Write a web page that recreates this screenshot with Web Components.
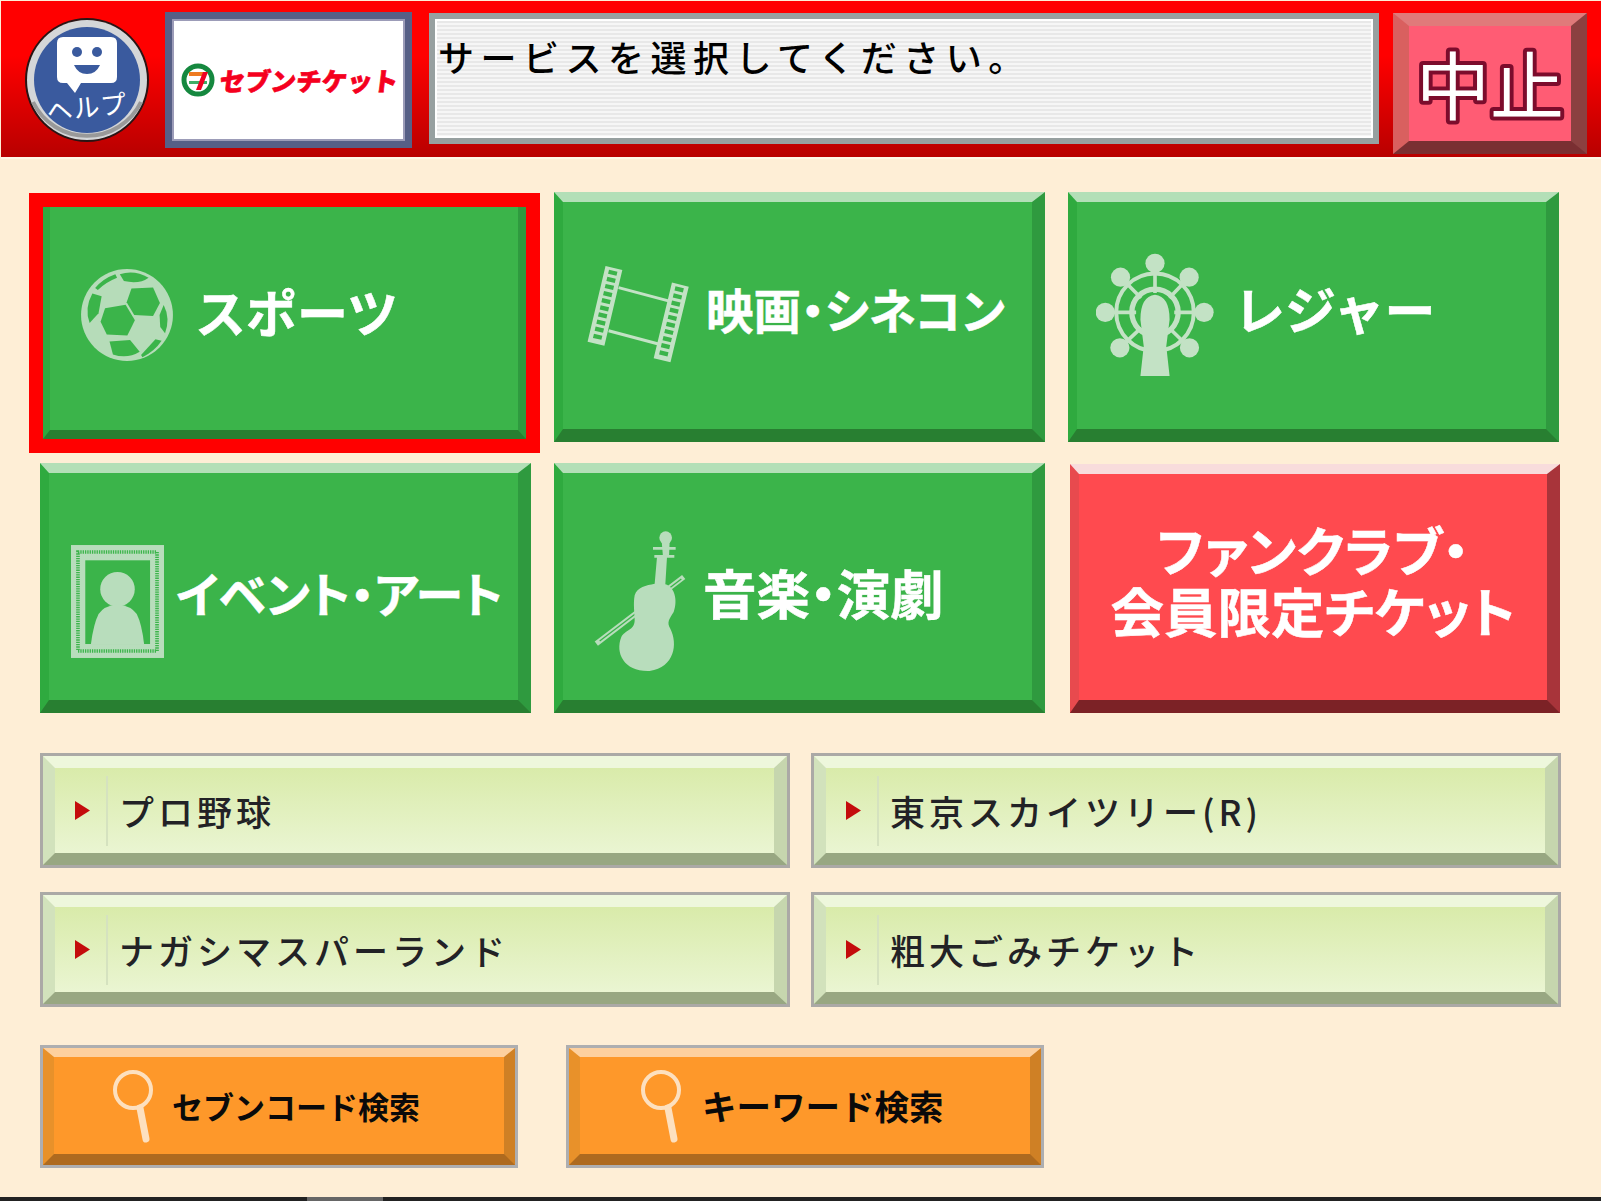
<!DOCTYPE html>
<html lang="ja">
<head>
<meta charset="utf-8">
<title>セブンチケット</title>
<style>
  html, body { margin: 0; padding: 0; }
  body {
    width: 1601px;
    height: 1201px;
    overflow: hidden;
    background: #feeed6;
    font-family: "Noto Sans CJK JP", "Noto Sans", sans-serif;
  }
  svg { display: block; }
</style>
</head>
<body>
<kiosk-page>
  <kiosk-header slot="header">サービスを選択してください。</kiosk-header>

  <big-button selected style="--pl:31px;--gap:22px;--fs:51px;--tt:-7px;--ff:normal">
    <svg slot="icon" width="92" height="96" viewBox="175 265 268 280" style="margin-top:-8px">
      <circle cx="309" cy="405" r="134" fill="#b6dcb9"/>
      <g fill="#3bb44a">
        <path d="M322 328 L385 325 L405 370 L385 408 L330 405 L308 368Z"/>
        <path d="M245 385 L305 375 L332 420 L310 465 L250 462 L232 425Z"/>
        <path d="M288 286 Q330 272 372 296 Q345 316 300 306Z"/>
        <path d="M216 326 Q240 298 275 286 L280 296 Q245 310 224 332Z"/>
        <path d="M208 342 L235 350 L226 400 L200 428 Q184 385 208 342Z"/>
        <path d="M416 376 Q436 415 420 458 L406 440 L404 405Z"/>
        <path d="M258 482 L318 478 L346 512 Q310 534 268 520Z"/>
        <path d="M350 522 L392 476 L410 480 Q390 510 354 528Z"/>
      </g>
    </svg>
    スポーツ
  </big-button>

  <big-button style="--pl:24px;--gap:16px;--fs:47.5px;--tt:-7px">
    <svg slot="icon" width="103" height="97" viewBox="110 260 310 292" style="margin-top:-2px">
      <g fill="none" stroke="#c3e2c5">
        <path d="M205 325 L355 365 M175 455 L325 495" stroke-width="9"/>
        <path d="M191 266 L137 494 M391 316 L336 544" stroke-width="52"/>
      </g>
      <path d="M189 274 L139 486 M389 324 L338 536" fill="none" stroke="#3bb44a" stroke-width="26" stroke-dasharray="13 9"/>
    </svg>
    映画・シネコン
  </big-button>

  <big-button style="--pl:19px;--gap:20px;--fs:51px;--tt:-7px;--ff:normal">
    <svg slot="icon" width="118" height="124" viewBox="104 220 356 372" style="margin-top:-2px">
      <g fill="#c3e2c5">
        <circle cx="282" cy="250" r="29"/><circle cx="178" cy="292" r="29"/><circle cx="385" cy="292" r="29"/>
        <circle cx="132" cy="398" r="29"/><circle cx="430" cy="398" r="29"/><circle cx="176" cy="505" r="29"/>
        <circle cx="386" cy="505" r="29"/>
      </g>
      <g fill="none" stroke="#c3e2c5">
        <circle cx="282" cy="398" r="117" stroke-width="12"/>
        <circle cx="282" cy="398" r="70" stroke-width="16"/>
        <path d="M282 250V340 M178 292L240 355 M385 292L325 355 M132 398H225 M430 398H340 M176 505L240 445 M386 505L325 445" stroke-width="11"/>
      </g>
      <path d="M238 590 L326 590 L316 500 L326 420 Q326 350 282 345 Q238 350 238 420 L248 500Z" fill="#c3e2c5"/>
    </svg>
    レジャー
  </big-button>

  <big-button style="--pl:22px;--gap:12px;--fs:48px;--tt:6px">
    <svg slot="icon" width="93" height="113" viewBox="122 272 280 340" style="margin-top:30px">
      <rect x="122" y="272" width="280" height="340" fill="#b8ddbc"/>
      <rect x="143" y="293" width="238" height="298" fill="#b8ddbc" stroke="#3bb44a" stroke-width="11" stroke-dasharray="4 3"/>
      <rect x="165" y="318" width="195" height="252" fill="#3bb44a"/>
      <circle cx="262" cy="405" r="52" fill="#b8ddbc"/>
      <path d="M182 570 Q190 510 205 480 Q220 455 262 450 Q304 455 320 480 Q335 510 342 570Z" fill="#b8ddbc"/>
    </svg>
    イベント・アート
  </big-button>

  <big-button style="--pl:30px;--gap:15px;--fs:53.5px;--tt:6px">
    <svg slot="icon" width="95" height="141" viewBox="130 232 285 423" style="margin-top:30px">
      <g fill="none" stroke="#b8ddbc">
        <path d="M140 570 L402 370" stroke-width="16"/>
        <path d="M150 562 L395 376" stroke="#3bb44a" stroke-width="4"/>
        <path d="M310 284 H378 M314 308 H374" stroke-width="8"/>
      </g>
      <g fill="#b8ddbc">
        <circle cx="348" cy="252" r="19"/>
        <path d="M336 262 L360 262 L358 310 L340 310Z"/>
        <path d="M322 310 L352 310 L347 392 C375 400 385 440 372 475 C360 495 350 505 362 525 C385 570 375 640 300 652 C225 655 195 600 215 550 C225 530 255 530 255 500 C255 480 250 450 255 425 C262 400 290 395 315 390Z"/>
      </g>
    </svg>
    音楽・演劇
  </big-button>

  <big-button tone="red" style="--fs:53.5px;--tt:-8px;margin:1px -1px 0 2px">
    <span style="display:block;width:100%;text-align:center;line-height:61px">ファンクラブ・<br>会員限定チケット</span>
  </big-button>

  <sub-button slot="list">プロ野球</sub-button>
  <sub-button slot="list">東京スカイツリー(R)</sub-button>
  <sub-button slot="list">ナガシマスパーランド</sub-button>
  <sub-button slot="list">粗大ごみチケット</sub-button>

  <search-button slot="search" style="--pl:58px;--gap:18px;--fs:31px">セブンコード検索</search-button>
  <search-button slot="search" style="--pl:60px;--gap:20px;--fs:34.5px">キーワード検索</search-button>
</kiosk-page>

<script>
// top level page: header, tiles, list buttons, search buttons, footer bar
class KioskPage extends HTMLElement {
  constructor() {
    super().attachShadow({ mode: "open" }).innerHTML = `
    <style>
      :host { display: flex; flex-direction: column; height: 1201px; }
      .tiles {
        display: grid;
        grid-template-columns: repeat(3, 491px);
        grid-auto-rows: 250px;
        column-gap: 23px;
        row-gap: 21px;
        margin: 33px 0 0 40px;
      }
      .list {
        display: grid;
        grid-template-columns: 750px 750px;
        grid-auto-rows: 115px;
        column-gap: 21px;
        row-gap: 24px;
        margin: 40px 0 0 40px;
      }
      .search {
        display: flex;
        gap: 48px;
        margin: 38px 0 0 40px;
      }
      .bar {
        margin-top: auto;
        height: 4px;
        background: linear-gradient(90deg, #222 307px, #666 307px, #666 383px, #222 383px);
      }
    </style>
    <slot name="header"></slot>
    <div class="tiles"><slot></slot></div>
    <div class="list"><slot name="list"></slot></div>
    <div class="search"><slot name="search"></slot></div>
    <div class="bar"></div>
    `;
  }
}

class KioskHeader extends HTMLElement {
  constructor() {
    super().attachShadow({ mode: "open" }).innerHTML = `
    <style>
      :host {
        display: flex;
        height: 158px;
        box-sizing: border-box;
        margin: 1px 0 0 1px;
        padding: 11px 14px 0 24px;
        background: linear-gradient(#ff0000 35%, #b80000);
        border-bottom: 2px solid #fff6e6;
      }
      .help { width: 124px; height: 126px; margin: 5px 16px 0 0; flex: none; }
      .logo {
        width: 247px;
        height: 136px;
        flex: none;
        box-sizing: border-box;
        margin-right: 17px;
        border: 7px solid #565f86;
        outline: 2px solid #9c9cb8;
        outline-offset: -9px;
        background: #fff;
        display: flex;
        align-items: center;
        padding: 0 0 0 9px;
        gap: 5px;
      }
      .logo span {
        color: #f5001e;
        font-size: 25.5px;
        font-weight: 900;
        white-space: nowrap;
        line-height: 1;
        display: inline-block;
        -webkit-text-stroke: 0.6px #f5001e;
        transform: skewX(-7deg);
      }
      .msg {
        width: 950px;
        height: 131px;
        flex: none;
        box-sizing: border-box;
        margin: 1px 14px 0 0;
        border: 6px solid #97a0a0;
        outline: 2px solid #fff;
        outline-offset: -8px;
        padding: 10px 0 0 3px;
        background: repeating-linear-gradient(#f6f6f6 0 2px, #e8e8e8 2px 4px);
        font-size: 36px;
        font-weight: 500;
        letter-spacing: 6.5px;
        line-height: 54px;
        color: #000;
        white-space: nowrap;
      }
      .stop {
        width: 194px;
        height: 141px;
        flex: none;
        box-sizing: border-box;
        margin-top: 1px;
        border-style: solid;
        border-width: 13px 16px 13px 16px;
        border-color: #e07a7a #8b4040 #7a2f32 #d9605f;
        background: #ff5c74;
      }
      .stop svg { overflow: visible; }
      .stop text {
        fill: #fff;
        stroke: #7c0c2c;
        stroke-width: 8px;
        stroke-linejoin: round;
        paint-order: stroke fill;
        font-size: 74px;
        font-weight: 400;
      }
    </style>
    <svg class="help" viewBox="0 0 124 126">
      <circle cx="62" cy="63" r="62" fill="#2a1414"/>
      <circle cx="62" cy="63" r="60" fill="#d4d6d8"/>
      <path d="M8 85 A60 60 0 0 0 116 85" fill="none" stroke="#999" stroke-width="4"/>
      <circle cx="62" cy="63" r="53" fill="#3a5a9e"/>
      <path d="M38 20 H86 Q92 20 92 26 V60 Q92 66 86 66 H56 L50 76 L42 66 H38 Q32 66 32 60 V26 Q32 20 38 20Z" fill="#fff"/>
      <circle cx="52" cy="35" r="5" fill="#3a5a9e"/><circle cx="72" cy="35" r="5" fill="#3a5a9e"/>
      <path d="M49 48 H75 Q71 57 62 57 Q53 57 49 48Z" fill="#3a5a9e"/>
      <text x="62" y="100" transform="rotate(-6 62 92)" text-anchor="middle" fill="#fff" font-size="26" letter-spacing="1" font-family="Noto Sans CJK JP">ヘルプ</text>
    </svg>
    <div class="logo">
      <svg width="34" height="34" viewBox="0 0 34 34">
        <circle cx="17" cy="17" r="14" fill="#fff" stroke="#15883f" stroke-width="5"/>
        <rect x="8" y="9" width="14" height="4" fill="#ee7b21"/>
        <rect x="8" y="18" width="18" height="3" fill="#3fae68"/>
        <path d="M22 9 H27 L20 27 H15Z" fill="#f00022"/>
      </svg>
      <span>セブンチケット</span>
    </div>
    <div class="msg"><slot></slot></div>
    <div class="stop">
      <svg width="162" height="115" viewBox="0 0 162 115">
        <text x="81" y="88" text-anchor="middle">中止</text>
      </svg>
    </div>
    `;
  }
}

// large bevelled tile, the corners come from the mitred borders
class BigButton extends HTMLElement {
  constructor() {
    super().attachShadow({ mode: "open" }).innerHTML = `
    <style>
      :host {
        display: flex;
        position: relative;
        align-items: center;
        box-sizing: border-box;
        padding-left: var(--pl, 0);
        border-style: solid;
        border-width: 10px 13px 13px 9px;
        border-color: #b3dfb7 #2f9a3f #287f31 #2faa3f;
        background: #3bb44a;
        color: #fff;
        font-weight: 700;
        font-size: var(--fs, 48px);
        line-height: 1.2;
        font-feature-settings: var(--ff, "palt");
        -webkit-text-stroke: 0.5px #fff;
        white-space: nowrap;
      }
      :host([tone="red"]) {
        border-color: #f8dcdc #a8343a #7c2226 #e84a4e;
        background: #ff4a4f;
      }
      /* the selected tile sits inside its red ring, without a top bevel */
      :host([selected]) {
        margin: 15px 5px 3px 3px;
        border-width: 0 8px 9px 7px;
      }
      .icon { display: flex; flex: none; margin-right: var(--gap, 0); }
      .text { flex: 1; margin-top: calc(var(--tt, 0px) * 2); }
      .ring {
        display: none;
        position: absolute;
        inset: -14px -22px -23px -21px;
        border: 14px solid #f00;
        pointer-events: none;
      }
      :host([selected]) .ring { display: block; }
    </style>
    <div class="icon"><slot name="icon"></slot></div>
    <div class="text"><slot></slot></div>
    <div class="ring"></div>
    `;
  }
}

class SubButton extends HTMLElement {
  constructor() {
    super().attachShadow({ mode: "open" }).innerHTML = `
    <style>
      :host {
        display: block;
        box-sizing: border-box;
        border: 3px solid #aba9a6;
      }
      .face {
        height: 100%;
        box-sizing: border-box;
        display: flex;
        align-items: center;
        border-style: solid;
        border-width: 12px 13px 12px 12px;
        border-color: #eef7dc #c6d6ae #98a782 #d2e2bc;
        background: linear-gradient(#d9ebaa, #eaf5d2);
        color: #222226;
      }
      .arrow {
        width: 53px;
        height: 70px;
        flex: none;
        display: flex;
        align-items: center;
        justify-content: center;
        box-sizing: border-box;
        padding-left: 3px;
        border-right: 2px solid #d5e2bf;
      }
      .label {
        margin-left: 11px;
        font-size: 35px;
        letter-spacing: 4px;
        font-weight: 500;
        line-height: 1;
        white-space: nowrap;
      }
    </style>
    <div class="face">
      <div class="arrow">
        <svg width="15" height="19" viewBox="0 0 15 19"><path d="M0 0 L15 9.5 L0 19Z" fill="#c40c0c"/></svg>
      </div>
      <div class="label"><slot></slot></div>
    </div>
    `;
  }
}

class SearchButton extends HTMLElement {
  constructor() {
    super().attachShadow({ mode: "open" }).innerHTML = `
    <style>
      :host {
        display: block;
        width: 478px;
        height: 123px;
        box-sizing: border-box;
        border: 3px solid #aeaeb0;
      }
      .face {
        height: 100%;
        box-sizing: border-box;
        display: flex;
        align-items: center;
        padding-left: var(--pl, 50px);
        gap: var(--gap, 20px);
        border-style: solid;
        border-width: 9px 11px 11px 11px;
        border-color: #fdd09f #cf8025 #ae6a1f #e8912a;
        background: #fe982a;
        color: #0a0a0a;
        font-size: var(--fs, 32px);
        font-weight: 700;
        line-height: 1;
        white-space: nowrap;
      }
      svg { flex: none; }
    </style>
    <div class="face">
      <svg width="42" height="76" viewBox="0 0 42 76">
        <circle cx="21" cy="22" r="18" fill="none" stroke="#fde0bf" stroke-width="4"/>
        <path d="M28 40 L34 71" stroke="#fde0bf" stroke-width="7" stroke-linecap="round"/>
      </svg>
      <span><slot></slot></span>
    </div>
    `;
  }
}

customElements.define("kiosk-page", KioskPage);
customElements.define("kiosk-header", KioskHeader);
customElements.define("big-button", BigButton);
customElements.define("sub-button", SubButton);
customElements.define("search-button", SearchButton);
</script>
</body>
</html>
